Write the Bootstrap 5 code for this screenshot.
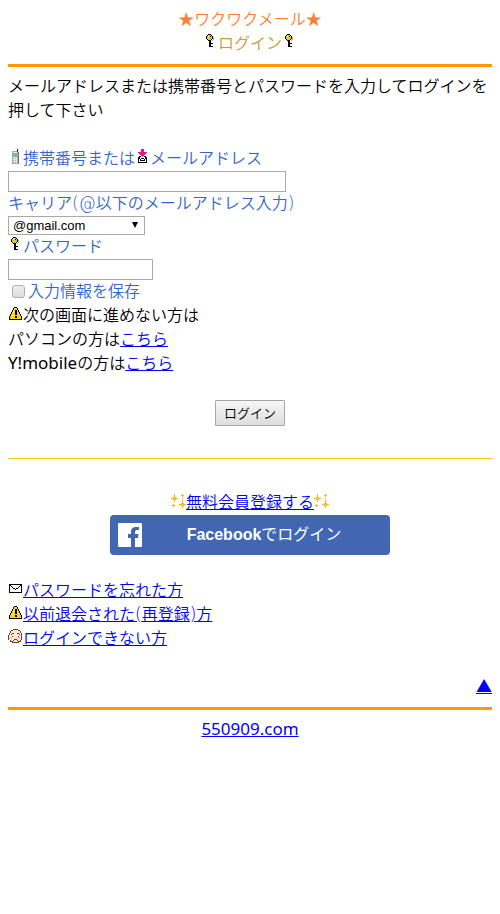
<!DOCTYPE html>
<html lang="ja">
<head>
<meta charset="utf-8">
<meta name="viewport" content="width=device-width, initial-scale=1">
<title>ワクワクメール ログイン</title>
<link href="https://cdn.jsdelivr.net/npm/bootstrap@5.3.0/dist/css/bootstrap.min.css" rel="stylesheet">
<style>
body { padding: 7px 8px; font: 350 16px/24px "Noto Sans", "Noto Sans CJK JP", sans-serif; color: #000; background: #fff; }
a { color: #00f; text-decoration: underline; }
a:hover { color: #00c; }
.latin { font-size: 17px; font-weight: 400; line-height: 1; }
.sign { font-family: "DejaVu Sans", sans-serif; font-size: 17px; line-height: 1; }
.brand-title { color: #ff8033; }
.page-title { color: #cc9933; font: inherit; margin: 0; }
.rule { height: 3px; margin: 9px 0 7px; border: 0; background: #ff9900; opacity: 1; }
.rule-thin { height: 1px; margin: 32px 0 31px; border: 0; background: #ffcc00; opacity: 1; }
.intro { margin-bottom: 25px; }
.blue { color: #3366cc; }
.caption { display: block; line-height: 22px; margin-bottom: 2px; }
.keep-row { line-height: 22px; margin-bottom: 1px; }
.pix { width: 15px; height: 15px; vertical-align: 0; shape-rendering: crispEdges; display: inline-block; }
.field { display: block; height: 21px; padding: 1px 2px; border: 1px solid #a9a9a9; border-radius: 0; font: 13px "Liberation Sans", sans-serif; max-width: 100%; }
.field-mail { width: 278px; }
.field-pass { width: 145px; }
.carrier { display: block; width: 137px; height: 19px; padding: 0 16px 0 4px; border: 1px solid #a9a9a9; border-radius: 0; font: 13px/17px "Liberation Sans", sans-serif; color: #000; appearance: none;
  background: #fff url("data:image/svg+xml,%3Csvg xmlns='http://www.w3.org/2000/svg' width='6' height='6'%3E%3Cpath d='M0 0h6L3 6z'/%3E%3C/svg%3E") no-repeat right 6px top 5px; }
.keep { appearance: none; width: 13px; height: 13px; margin: 0 3px 0 4px; border: 1px solid #b0b0b0; border-radius: 3px; background: linear-gradient(#eee, #ddd); vertical-align: -1px; }
.keep:checked { background: #36c; }
.send { height: 26px; margin-top: 25px; padding: 0 8px; border: 1px solid #a6a6a6; border-radius: 1px; background: linear-gradient(#f6f6f6, #dedede); color: #000; font: 350 13px/22px "Noto Sans", "Noto Sans CJK JP", sans-serif; }
.fb { width: 280px; max-width: 100%; height: 40px; margin: 1px auto 23px; padding: 0 4px 0 8px; border-radius: 4px; background: #4267b2; color: #fff; font: 700 16px/24px "Liberation Sans", "Noto Sans CJK JP", sans-serif; text-decoration: none; }
.fb:hover { color: #fff; }
.fb-kana { font-weight: 400; }
</style>
</head>
<body>
<svg class="d-none" xmlns="http://www.w3.org/2000/svg">
  <symbol id="key" viewBox="0 0 15 15">
    <path fill="#000" d="M5 0h3v1H5zM4 1h5v5H4zM3 2h7v3H3zM5 6h3v1H5zM6 7h2v6H6zM8 9h2v1H8zM8 12h2v1H8z"/>
    <path fill="#e6cb20" d="M5 1h3v1H5zM4 2h5v3H4zM5 5h3v1H5z"/><path fill="#fff" d="M5 2h1v1H5z"/><path fill="#000" d="M7 2h1v1H7z"/><path fill="#aaa" d="M10 3h1v3h-1zM9 6h1v1H9z"/>
  </symbol>
  <symbol id="phone" viewBox="0 0 15 15">
    <path fill="#222" d="M9 0h1v3H9z"/><path fill="#777" d="M10 3h1v12H5v-1h5z"/><path fill="#aaa" d="M4 2h5v1h1v12H4z"/><path fill="#e8ecec" d="M5 3h4v11H5z"/><path fill="#78b0b5" d="M5 4h4v4H5z"/><path fill="#a0adad" d="M5 9h1v1H5zM7 9h1v1H7zM5 11h1v1H5zM7 11h1v1H7zM5 13h1v1H5zM7 13h1v1H7z"/>
  </symbol>
  <symbol id="inbox" viewBox="0 0 15 15">
    <path fill="#f0147d" d="M6 0h3v3h3v1h-1v1h-1v1H9v1H8v1H7V7H6V6H5V5H4V4H3V3h3z"/><path fill="#000" d="M4 7h2v1H4zM9 7h2v1H9zM3 8h9v6H3z"/><path fill="#fff" d="M5 8h5v1H5zM4 10h1v3H4zM10 10h1v3h-1zM5 12h5v1H5zM5 9h1v1H5zM9 9h1v1H9zM6 10h3v1H6z"/>
  </symbol>
  <symbol id="warn" viewBox="0 0 15 15">
    <path fill="#000" d="M6 1h3v1h1v2h1v2h1v2h1v2h1v4H1v-4h1V8h1V6h1V4h1V2h1z"/><path fill="#f7d414" d="M6 2h3v2h1v2h1v2h1v2h1v3H2v-3h1V8h1V6h1V4h1z"/><path fill="#000" d="M7 4h2v5H7zM7 10h2v2H7z"/><path fill="#fff27a" d="M5 5h1v2H5zM4 8h1v2H4z"/>
  </symbol>
  <symbol id="mail" viewBox="0 0 15 15">
    <path fill="#000" d="M1 3h13v9H1z"/><path fill="#fff" d="M2 4h11v7H2z"/><path fill="#000" d="M2 4h1v1H2zM3 5h1v1H3zM4 6h1v1H4zM5 7h2v1H5zM7 8h1v1H7zM8 7h2v1H8zM10 6h1v1h-1zM11 5h1v1h-1zM12 4h1v1h-1z"/>
  </symbol>
  <symbol id="face" viewBox="0 0 15 15">
    <path fill="#604535" d="M5 0h5v1h2v1h1v2h1v7h-1v2h-2v1H4v-1H2v-2H0V6h1V4h1V2h1V1h2z"/><path fill="#ffe8d0" d="M5 1h5v1h2v2h1v7h-1v1h-2v1H5v-1H3v-1H1V6h1V4h1V2h2z"/><path fill="#fbb8b0" d="M2 8h2v2H2zM10 8h2v2h-2z"/><path fill="#6b3b25" d="M4 4h2v1H4zM3 5h1v1H3zM9 4h2v1H9zM11 5h1v1h-1zM4 7h1v1H4zM10 7h1v1h-1zM6 10h3v1H6zM5 11h1v1H5zM9 11h1v1H9z"/>
  </symbol>
  <symbol id="spark" viewBox="0 0 15 15">
    <path fill="#ffb310" d="M3 1h1v3h1v1h2v1H5v1H4v2H3V7H2V6H0V5h2V4h1zM11 7h1v3h1v1h2v1h-2v1h-1v2h-1v-2h-1v-1H8v-1h2v-1h1zM11 1h1v1h1v1h-1v1h-1V3h-1V2h1zM11 5h1v1h-1zM2 11h1v1h1v1H3v1H2v-1H1v-1h1z"/><path fill="#ffe98a" d="M11 11h1v1h-1zM3 5h1v1H3z"/>
  </symbol>
</svg>

<header class="text-center" id="top">
  <div class="brand-title">★ワクワクメール★</div>
  <h1 class="page-title"><svg class="pix"><use href="#key"/></svg>ログイン<svg class="pix"><use href="#key"/></svg></h1>
</header>
<hr class="rule">
<main>
  <p class="intro">メールアドレスまたは携帯番号とパスワードを入力してログインを押して下さい</p>
  <form onsubmit="return false">
    <label class="blue caption" for="mailaddr"><svg class="pix"><use href="#phone"/></svg>携帯番号または<svg class="pix"><use href="#inbox"/></svg>メールアドレス</label>
    <input class="field field-mail" id="mailaddr" type="text">
    <label class="blue caption" for="carrier">キャリア<span class="sign">(@</span>以下のメールアドレス入力<span class="sign">)</span></label>
    <select class="carrier" id="carrier"><option>@gmail.com</option></select>
    <label class="blue caption" for="pass"><svg class="pix"><use href="#key"/></svg>パスワード</label>
    <input class="field field-pass" id="pass" type="password">
    <div class="blue keep-row"><input class="keep" id="keep" type="checkbox"><label for="keep">入力情報を保存</label></div>
    <div><svg class="pix"><use href="#warn"/></svg>次の画面に進めない方は</div>
    <div>パソコンの方は<a href="#pc">こちら</a></div>
    <div><span class="latin">Y!mobile</span>の方は<a href="#ymobile">こちら</a></div>
    <div class="d-flex justify-content-center"><button class="send" type="submit">ログイン</button></div>
  </form>
  <hr class="rule-thin">
  <div class="text-center"><svg class="pix"><use href="#spark"/></svg><a href="#register">無料会員登録する</a><svg class="pix"><use href="#spark"/></svg></div>
  <a class="fb d-flex align-items-center" href="#facebook">
    <svg width="24" height="24" viewBox="0 0 24 24"><path fill="#fff" d="M1 0h22a1 1 0 0 1 1 1v22a1 1 0 0 1-1 1h-6v-9h3l.5-4H17V9c0-1 .5-2 2-2h2V4h-3c-3 0-5 1.500-5 5v2h-3v4h3v9H1a1 1 0 0 1-1-1V1a1 1 0 0 1 1-1z"/></svg>
    <span class="flex-grow-1 text-center">Facebook<span class="fb-kana">でログイン</span></span>
  </a>
  <div><svg class="pix"><use href="#mail"/></svg><a href="#forgot">パスワードを忘れた方</a></div>
  <div><svg class="pix"><use href="#warn"/></svg><a href="#rejoin">以前退会された<span class="sign">(</span>再登録<span class="sign">)</span>方</a></div>
  <div><svg class="pix"><use href="#face"/></svg><a href="#trouble">ログインできない方</a></div>
  <div class="text-end mt-4"><a href="#top">▲</a></div>
</main>
<hr class="rule">
<footer class="text-center"><a class="latin" href="#home">550909.com</a></footer>
<script src="https://cdn.jsdelivr.net/npm/bootstrap@5.3.0/dist/js/bootstrap.bundle.min.js"></script>
</body>
</html>
